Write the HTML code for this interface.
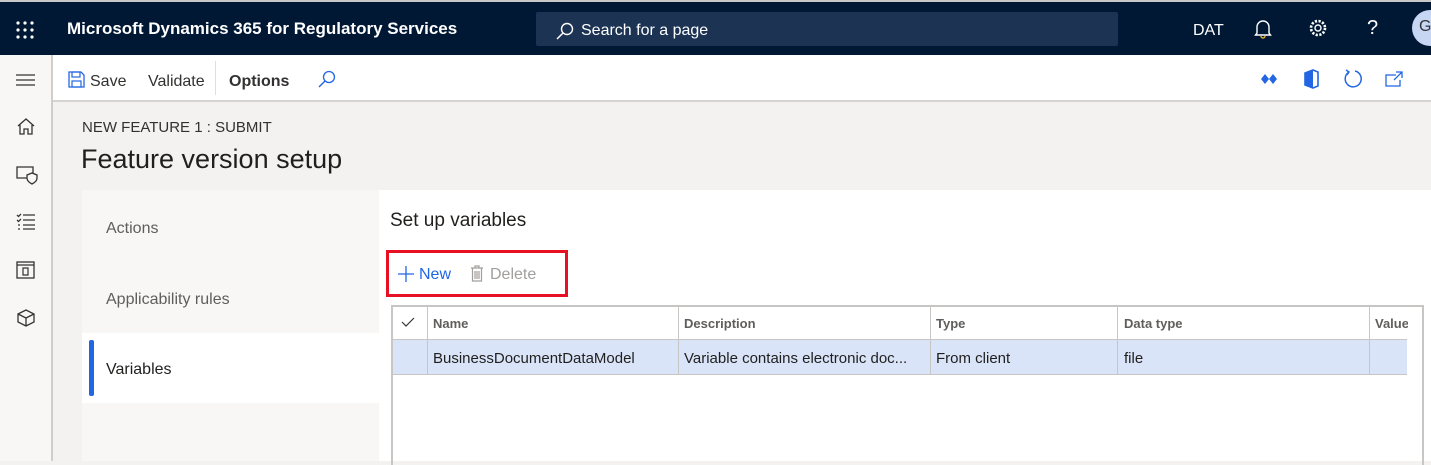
<!DOCTYPE html>
<html><head><style>
*{margin:0;padding:0;box-sizing:border-box}
body{width:1431px;height:461px;overflow:hidden;font-family:"Liberation Sans",sans-serif;background:#f3f2f1;position:relative;color:#201f1e}
.abs{position:absolute}
.top{left:0;top:0;width:1431px;height:55px;background:#011835;border-top:2px solid #c8c8c8}
.tb{left:0;top:55px;width:1431px;height:47px;background:#fff;border-bottom:2px solid #d6d4d2}
.nav{left:0;top:55px;width:53px;height:406px;background:#f8f7f6;border-right:2px solid #d0cecc}
.t{white-space:nowrap}
</style></head><body>
<div class="abs top"></div>
<svg class="abs" style="left:16px;top:21px" width="18" height="18"><g fill="#fff"><circle cx="2" cy="2" r="1.6"/><circle cx="9" cy="2" r="1.6"/><circle cx="16" cy="2" r="1.6"/><circle cx="2" cy="9" r="1.6"/><circle cx="9" cy="9" r="1.6"/><circle cx="16" cy="9" r="1.6"/><circle cx="2" cy="16" r="1.6"/><circle cx="9" cy="16" r="1.6"/><circle cx="16" cy="16" r="1.6"/></g></svg>
<div class="abs t" style="left:67px;top:19px;color:#fff;font-size:17px;font-weight:bold">Microsoft Dynamics 365 for Regulatory Services</div>
<div class="abs" style="left:536px;top:12px;width:582px;height:34px;background:#1c3354;border-radius:2px"></div>
<svg class="abs" style="left:556px;top:22px" width="18" height="18"><circle cx="11" cy="7" r="5.5" fill="none" stroke="#fff" stroke-width="1.4"/><path d="M7 11L1 17" stroke="#fff" stroke-width="1.5"/></svg>
<div class="abs t" style="left:581px;top:22px;color:#fff;font-size:16px">Search for a page</div>
<div class="abs t" style="left:1193px;top:22px;color:#fff;font-size:16px">DAT</div>
<svg class="abs" style="left:1253px;top:19px" width="20" height="20"><path d="M4 14V8a6 6 0 0 1 12 0v6l1.5 2h-15z" fill="none" stroke="#fff" stroke-width="1.4"/><path d="M8 17a2 2 0 0 0 4 0" fill="none" stroke="#f0b030" stroke-width="1.4"/></svg>
<svg class="abs" style="left:1308px;top:18px" width="20" height="20"><circle cx="10" cy="10" r="3" fill="none" stroke="#fff" stroke-width="1.4"/><circle cx="10" cy="10" r="7" fill="none" stroke="#fff" stroke-width="2.6" stroke-dasharray="2.2 1.5"/></svg>
<div class="abs t" style="left:1367px;top:17px;color:#fff;font-size:20px">?</div>
<div class="abs" style="left:1412px;top:10px;width:36px;height:36px;border-radius:50%;background:#c7d6f3;color:#333;font-size:16px;padding:8px 0 0 7px">G</div>

<div class="abs tb"></div>
<div class="abs nav"></div>
<svg class="abs" style="left:16px;top:74px" width="20" height="12"><path d="M0 1H19M0 6H19M0 11H19" stroke="#333" stroke-width="1.2"/></svg>
<svg class="abs" style="left:16px;top:117px" width="20" height="20"><path d="M2 9L10 2l8 7M4 8v9h4v-5h4v5h4V8" fill="none" stroke="#333" stroke-width="1.3"/></svg>
<svg class="abs" style="left:16px;top:165px" width="22" height="20"><path d="M11 13H1V2h16v6" fill="none" stroke="#333" stroke-width="1.3"/><path d="M11 10l5-2 5 2v3c0 3-3 5-5 6-2-1-5-3-5-6z" fill="none" stroke="#333" stroke-width="1.3"/></svg>
<svg class="abs" style="left:16px;top:213px" width="20" height="18"><path d="M7 2h12M7 7h12M7 12h12M7 16h12M1 2l1.5 1.5L5 1M1 7l1.5 1.5L5 6M2 12h2M2 16h2" stroke="#333" stroke-width="1.3" fill="none"/></svg>
<svg class="abs" style="left:16px;top:261px" width="20" height="18"><rect x="1" y="1" width="17" height="16" fill="none" stroke="#333" stroke-width="1.3"/><path d="M1 4h17M7 7h5v7H7z" fill="none" stroke="#333" stroke-width="1.2"/></svg>
<svg class="abs" style="left:16px;top:308px" width="20" height="20"><path d="M2 6l8-4 8 4v8l-8 4-8-4zM2 6l8 4 8-4M10 10v8" fill="none" stroke="#333" stroke-width="1.3"/></svg>

<svg class="abs" style="left:68px;top:71px" width="17" height="17"><path d="M1 1h12l3 3v12H1z" fill="none" stroke="#2266e3" stroke-width="1.3"/><rect x="4" y="1" width="8" height="5" fill="none" stroke="#2266e3" stroke-width="1.2"/><rect x="4" y="10" width="9" height="6" fill="none" stroke="#2266e3" stroke-width="1.2"/></svg>
<div class="abs t" style="left:90px;top:73px;font-size:16px;color:#323130">Save</div>
<div class="abs t" style="left:148px;top:73px;font-size:16px;color:#323130">Validate</div>
<div class="abs" style="left:215px;top:61px;width:1px;height:34px;background:#e1dfdd"></div>
<div class="abs t" style="left:229px;top:73px;font-size:16px;font-weight:bold;color:#323130">Options</div>
<svg class="abs" style="left:318px;top:70px" width="18" height="18"><circle cx="11" cy="7" r="5.5" fill="none" stroke="#2266e3" stroke-width="1.3"/><path d="M7 11L1 17" stroke="#2266e3" stroke-width="1.4"/></svg>
<svg class="abs" style="left:1260px;top:73px" width="18" height="12"><path d="M5 1l4 5-4 5-4-5zM13 1l4 5-4 5-4-5z" fill="#2266e3"/></svg>
<svg class="abs" style="left:1303px;top:69px" width="16" height="20"><path d="M2 4l8-3 5 2v14l-5 2-8-3z" fill="none" stroke="#2266e3" stroke-width="1.6"/><path d="M2 4v12l8 3V1z" fill="#2266e3"/></svg>
<svg class="abs" style="left:1343px;top:69px" width="20" height="20"><path d="M6 3A8 8 0 1 0 12 2" fill="none" stroke="#2266e3" stroke-width="1.5"/><path d="M3 1l3 2-2 3" fill="none" stroke="#2266e3" stroke-width="1.4"/></svg>
<svg class="abs" style="left:1385px;top:71px" width="20" height="16"><path d="M11 4H1v11h14V9M11 1h6v6M17 1l-8 8" fill="none" stroke="#2266e3" stroke-width="1.3"/></svg>

<div class="abs t" style="left:82px;top:119px;font-size:15px;color:#323130">NEW FEATURE 1 : SUBMIT</div>
<div class="abs t" style="left:81px;top:144px;font-size:27px;color:#201f1e">Feature version setup</div>

<div class="abs" style="left:82px;top:190px;width:297px;height:271px;background:#f8f7f6"></div>
<div class="abs t" style="left:106px;top:220px;font-size:16px;color:#605e5c">Actions</div>
<div class="abs t" style="left:106px;top:291px;font-size:16px;color:#605e5c">Applicability rules</div>
<div class="abs" style="left:82px;top:333px;width:297px;height:70px;background:#fff"></div>
<div class="abs" style="left:89px;top:340px;width:5px;height:56px;background:#2266e3;border-radius:2px"></div>
<div class="abs t" style="left:106px;top:361px;font-size:16px;color:#201f1e">Variables</div>

<div class="abs" style="left:379px;top:190px;width:1052px;height:271px;background:#fff"></div>
<div class="abs t" style="left:390px;top:210px;font-size:19px;color:#201f1e">Set up variables</div>
<div class="abs" style="left:386px;top:250px;width:182px;height:47px;border:3px solid #e81123"></div>
<svg class="abs" style="left:398px;top:266px" width="16" height="16"><path d="M8 0v16M0 8h16" stroke="#2266e3" stroke-width="1.3"/></svg>
<div class="abs t" style="left:419px;top:266px;font-size:16px;color:#2266e3">New</div>
<svg class="abs" style="left:470px;top:265px" width="14" height="17"><path d="M1 3h12M5 3V1h4v2M2.5 3v13h9V3M5 6v8M7 6v8M9 6v8" fill="none" stroke="#a19f9d" stroke-width="1.2"/></svg>
<div class="abs t" style="left:490px;top:266px;font-size:16px;color:#a19f9d">Delete</div>

<div class="abs" style="left:391px;top:305px;width:1033px;height:160px;border:2px solid #c8c6c4;border-bottom:none"></div>
<div class="abs" style="left:393px;top:340px;width:1014px;height:35px;background:#d9e4f8"></div>
<div class="abs" style="left:393px;top:339px;width:1014px;height:1px;background:#c8c6c4"></div>
<div class="abs" style="left:393px;top:374px;width:1014px;height:1px;background:#c8c6c4"></div>
<div class="abs" style="left:427px;top:307px;width:1px;height:68px;background:#c8c6c4"></div>
<div class="abs" style="left:678px;top:307px;width:1px;height:68px;background:#c8c6c4"></div>
<div class="abs" style="left:930px;top:307px;width:1px;height:68px;background:#c8c6c4"></div>
<div class="abs" style="left:1117px;top:307px;width:1px;height:68px;background:#c8c6c4"></div>
<div class="abs" style="left:1369px;top:307px;width:1px;height:68px;background:#c8c6c4"></div>
<svg class="abs" style="left:401px;top:317px" width="14" height="11"><path d="M1 5l4 4 8-8" fill="none" stroke="#333" stroke-width="1.2"/></svg>
<div class="abs t" style="left:433px;top:316px;font-size:13px;font-weight:bold;color:#605e5c">Name</div>
<div class="abs t" style="left:684px;top:316px;font-size:13px;font-weight:bold;color:#605e5c">Description</div>
<div class="abs t" style="left:936px;top:316px;font-size:13px;font-weight:bold;color:#605e5c">Type</div>
<div class="abs t" style="left:1124px;top:316px;font-size:13px;font-weight:bold;color:#605e5c">Data type</div>
<div class="abs t" style="left:1375px;top:316px;width:33px;overflow:hidden;font-size:13px;font-weight:bold;color:#605e5c">Value</div>
<div class="abs t" style="left:433px;top:350px;font-size:15px;color:#201f1e">BusinessDocumentDataModel</div>
<div class="abs t" style="left:684px;top:350px;font-size:15px;color:#201f1e">Variable contains electronic doc...</div>
<div class="abs t" style="left:936px;top:350px;font-size:15px;color:#201f1e">From client</div>
<div class="abs t" style="left:1124px;top:350px;font-size:15px;color:#201f1e">file</div>
</body></html>
